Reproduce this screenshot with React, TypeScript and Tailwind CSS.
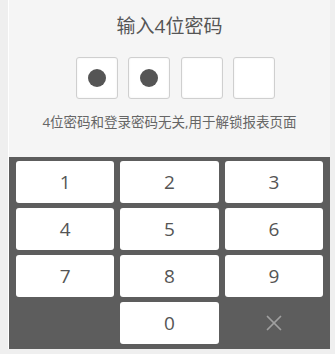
import { X } from 'lucide-react';

const keys = ['1', '2', '3', '4', '5', '6', '7', '8', '9'];

const PinPad = () => {
  const filled = 2;

  return (
    <div className="w-[335px] h-[354px] bg-[#efefef] pl-[8px] pr-[5px] pb-[5px]" style={{ fontFamily: '"Open Sans", "Noto Sans CJK SC", sans-serif' }}>
      <div className="h-full bg-[#f5f5f5] border-l border-white flex flex-col">
        <div className="h-[157px] flex flex-col items-center">
          <h1 className="mt-[12px] text-[19px] leading-[28px] text-[#555]">输入4位密码</h1>
          <div className="mt-[17px] flex gap-[10.5px] ml-[12px]">
            {[0, 1, 2, 3].map((i) => (
              <div
                key={i}
                className="w-[42px] h-[42px] rounded-[3px] border-[1.5px] border-[#cfcfcf] bg-white shadow-[inset_0_0_2px_rgba(0,0,0,0.08)] flex items-center justify-center"
              >
                {i < filled && <div className="w-[18px] h-[18px] rounded-full bg-[#555]" />}
              </div>
            ))}
          </div>
          <p className="mt-[14px] text-[13.5px] leading-[18px] text-[#666]">4位密码和登录密码无关,用于解锁报表页面</p>
        </div>
        <div className="h-[192px] w-[321px] bg-[#5d5d5d] pt-[4px] pb-[5px] px-[7px] grid grid-cols-3 grid-rows-4 gap-x-[6px] gap-y-[5px]">
          {keys.map((k) => (
            <button key={k} className="bg-white rounded-[3px] text-[19px] text-[#555] flex items-center justify-center">
              {k}
            </button>
          ))}
          <div />
          <button className="bg-white rounded-[3px] text-[19px] text-[#555] flex items-center justify-center">0</button>
          <button className="flex items-center justify-center text-[#a0a0a0]">
            <X size={26} strokeWidth={1.6} />
          </button>
        </div>
      </div>
    </div>
  );
};

export default function App() {
  return <PinPad />;
}
